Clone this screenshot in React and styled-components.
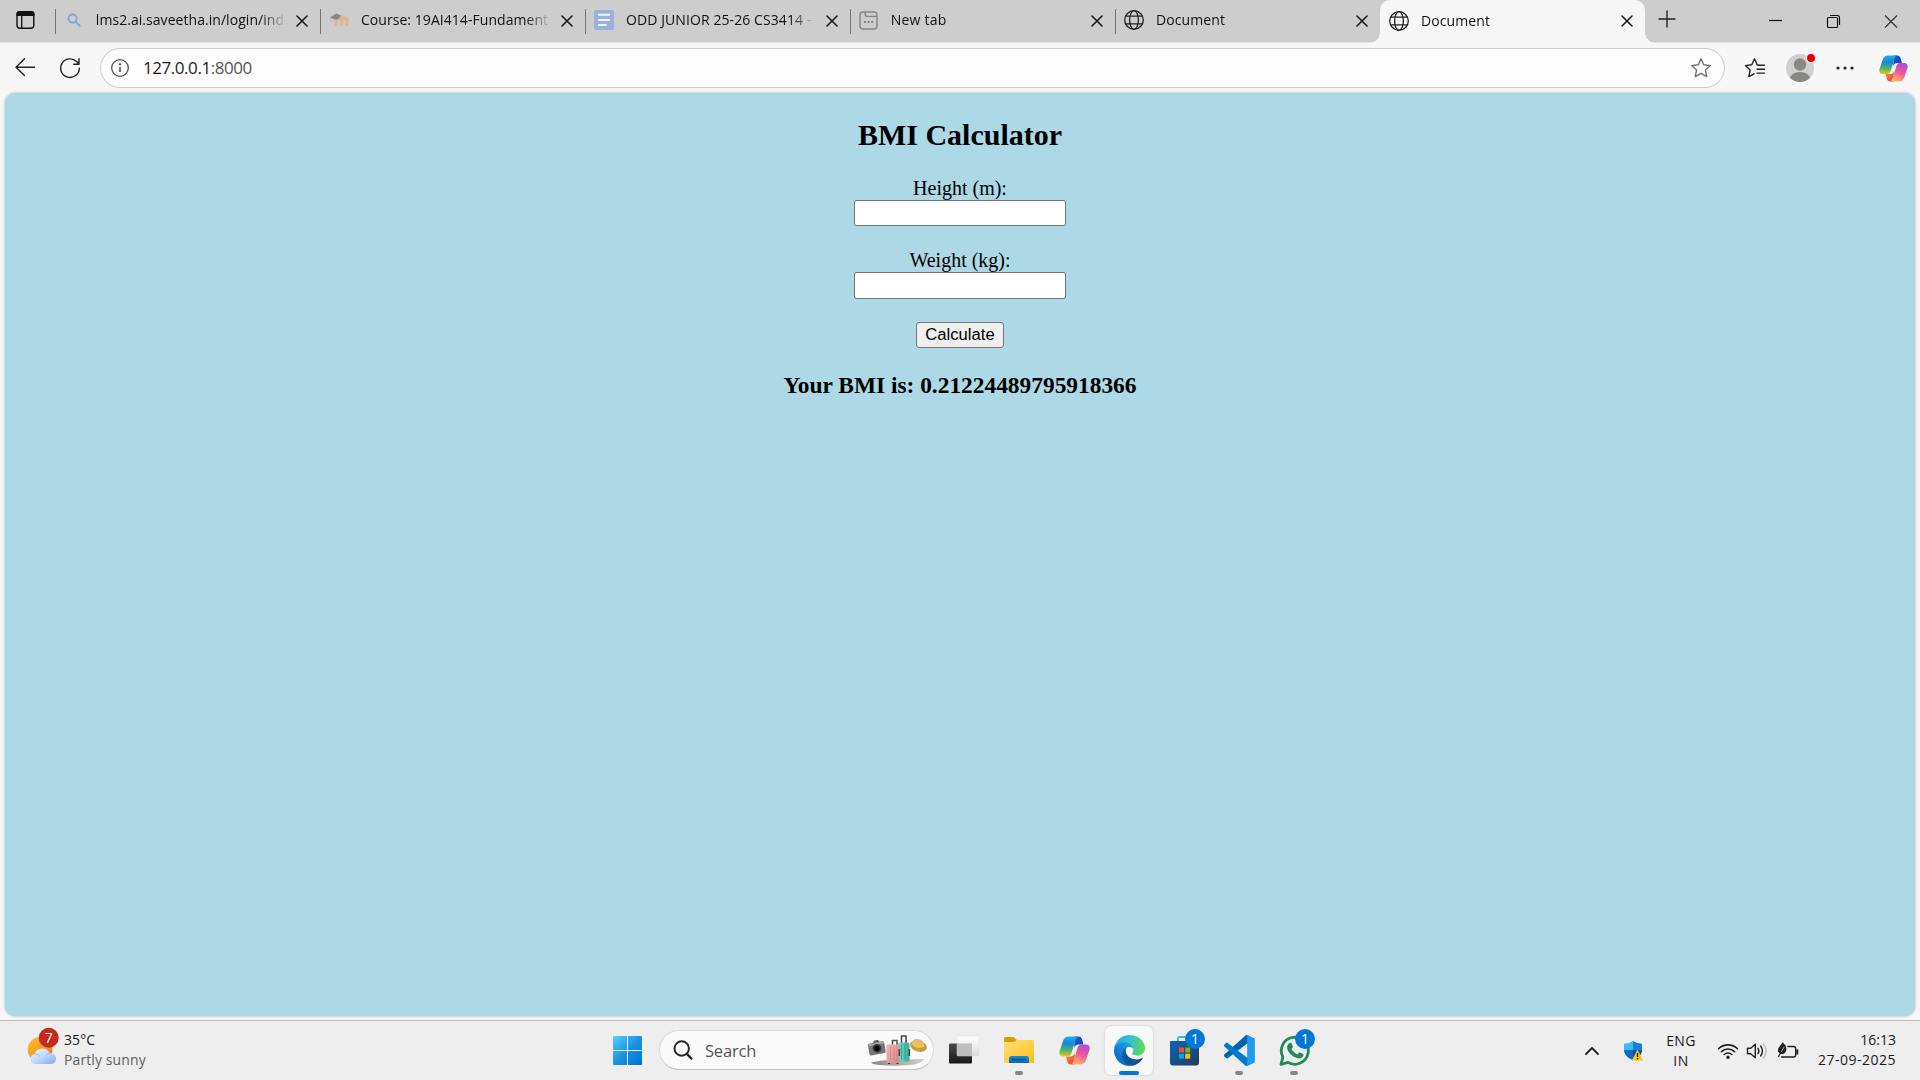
import React from "react";
import styled, { createGlobalStyle } from "styled-components";

const GlobalStyle = createGlobalStyle`
  * { box-sizing: border-box; }
  html, body { margin: 0; padding: 0; overflow: hidden; }
  body { background: #f7f7f7; font-family: "Open Sans", "Noto Sans", sans-serif; color: #1b1b1b; }
  svg { display: block; flex: none; }
  button { font: inherit; }
`;

const Screen = styled.div`
  width: 1920px;
  height: 1080px;
  display: flex;
  flex-direction: column;
  background: #f7f7f7;
  overflow: hidden;
`;

/* ---------- tab strip ---------- */
const TabStrip = styled.header`
  display: flex;
  height: 43px;
  flex: none;
  background: #cdcdcd;
  border-bottom: 1px solid #e4e4e4;
`;
const TabActions = styled.div`
  width: 55px;
  padding: 10px 0 0 16px;
`;
const TabBox = styled.div`
  position: relative;
  display: flex;
  align-items: center;
  width: 265px;
  height: ${(p) => (p.$active ? 43 : 42)}px;
  padding: 0 6px 2px 9px;
  background: ${(p) => (p.$active ? "#f7f7f7" : "transparent")};
  border-radius: ${(p) => (p.$active ? "10px 10px 0 0" : 0)};
  z-index: ${(p) => (p.$active ? 1 : 0)};
  &::before, &::after {
    content: "";
    display: ${(p) => (p.$active ? "block" : "none")};
    position: absolute;
    bottom: 0;
    width: 10px;
    height: 10px;
  }
  &::before { left: -10px; background: radial-gradient(circle at 0 0, transparent 9.5px, #f7f7f7 10px); }
  &::after { right: -10px; background: radial-gradient(circle at 100% 0, transparent 9.5px, #f7f7f7 10px); }
`;
const TabRule = styled.i`
  width: 1px;
  height: 25px;
  margin: 2px 0 0 -9px;
  background: ${(p) => (p.$hidden ? "transparent" : "#767676")};
`;
const Favicon = styled.span`
  display: flex;
  justify-content: center;
  width: 20px;
  margin-left: 8px;
`;
const TabTitle = styled.span`
  width: 191px;
  margin-left: 12px;
  white-space: nowrap;
  font-size: 14px;
  line-height: 22px;
  letter-spacing: ${(p) => p.$track || 0}px;
  color: #111;
  mask-image: linear-gradient(to right, #000 164px, transparent 191px);
`;
const TabClose = styled.button`
  display: flex;
  align-items: center;
  justify-content: center;
  width: 24px;
  height: 24px;
  margin: 1px 0 0 5px;
  padding: 0;
  border: 0;
  background: none;
`;
const NewTab = styled.div`
  width: 44px;
  padding: 10px 0 0 13px;
`;
const WindowButtons = styled.div`
  display: flex;
  margin-left: auto;
  svg { width: 58px; height: 42px; }
`;

/* ---------- toolbar ---------- */
const Toolbar = styled.nav`
  display: flex;
  align-items: center;
  flex: none;
  height: 50px;
  padding-left: 14px;
`;
const NavButtons = styled.div`
  display: flex;
  gap: 23px;
  width: 86px;
`;
const AddressBar = styled.div`
  display: flex;
  align-items: center;
  flex: none;
  width: 1625px;
  height: 40px;
  padding: 0 12px 0 9px;
  background: #fdfdfd;
  border: 1px solid #cbcbcb;
  border-radius: 20px;
`;
const Url = styled.span`
  flex: 1;
  margin-left: 13px;
  padding-bottom: 1px;
  font-size: 17px;
  line-height: 26px;
  letter-spacing: ${(p) => p.$track}px;
  span { color: #555; }
`;
const ToolbarEnd = styled.div`
  display: flex;
  align-items: center;
  padding-left: 19px;
`;
const Slot = styled.span`
  display: flex;
  flex: none;
  justify-content: center;
  width: ${(p) => p.$w}px;
  margin-left: ${(p) => p.$before || 0}px;
  margin-right: ${(p) => p.$after || 0}px;
`;

/* ---------- page ---------- */
const Page = styled.main`
  display: flex;
  flex-direction: column;
  align-items: center;
  flex: none;
  width: 1910px;
  height: 923px;
  margin: 0 0 4px 5px;
  padding-top: 25px;
  background: #add8e6;
  border-radius: 10px;
  box-shadow: 0 0 3px rgba(0, 0, 0, 0.3);
  font-family: "Liberation Serif", "Times New Roman", serif;
  color: #000;
`;
const Title = styled.h2`
  margin: 0 0 25px;
  font-size: 30px;
  line-height: 34px;
`;
const Field = styled.label`
  display: flex;
  flex-direction: column;
  align-items: center;
  margin-bottom: 23px;
  font-size: 20px;
  line-height: 23px;
`;
const Input = styled.input`
  width: 212px;
  height: ${(p) => p.$h}px;
  padding: 1px 2px;
  background: #fff;
  border: 1px solid #767676;
  border-radius: 2px;
  outline: none;
`;
const Calculate = styled.button`
  width: 88px;
  height: 26px;
  padding: 0;
  background: #efefef;
  border: 1px solid #767676;
  border-radius: 3px;
  font: 16.67px/22px "Liberation Sans", Arial, sans-serif;
  color: #000;
`;
const Result = styled.h3`
  margin: 24px 0 0;
  font-size: 23.4px;
  line-height: 27px;
`;

/* ---------- taskbar ---------- */
const Taskbar = styled.footer`
  display: grid;
  grid-template-columns: 600px 722px 1fr;
  flex: none;
  height: 60px;
  background: #eee;
  border-top: 1px solid #bdbdbd;
`;
const Weather = styled.div`
  display: flex;
  padding: 5px 0 0 26px;
`;
const WeatherText = styled.div`
  display: flex;
  flex-direction: column;
  margin: 4px 0 0 4px;
  font-size: 14px;
  line-height: 20px;
`;
const Line = styled.span`
  color: ${(p) => (p.$muted ? "#606060" : "#1b1b1b")};
  letter-spacing: ${(p) => p.$track || 0}px;
  white-space: nowrap;
`;
const Dock = styled.div`
  display: flex;
  align-items: center;
  padding-bottom: 1px;
`;
const StartSlot = styled.div`
  width: 59px;
  padding-left: 13px;
`;
const SearchBox = styled.div`
  display: flex;
  align-items: center;
  width: 275px;
  height: 40px;
  margin-right: 2px;
  padding: 0 6px 0 13px;
  background: #fafafa;
  border: 1px solid #dadada;
  border-bottom-color: #c2c2c2;
  border-radius: 20px;
`;
const SearchLabel = styled.span`
  flex: 1;
  margin-left: 12px;
  padding-top: 1px;
  font-size: 16.5px;
  letter-spacing: ${(p) => p.$track}px;
  color: #555;
`;
const AppCell = styled.div`
  position: relative;
  display: flex;
  align-items: center;
  justify-content: center;
  width: 48px;
  height: 49px;
  margin: 0 3px 0 4px;
  background: ${(p) => (p.$active ? "#f8f8f8" : "transparent")};
  border-radius: 6px;
  box-shadow: ${(p) => (p.$active ? "0 0 2px rgba(0,0,0,.22)" : "none")};
`;
const RunMark = styled.i`
  position: absolute;
  bottom: 0;
  width: ${(p) => (p.$active ? 20 : 8)}px;
  height: 4px;
  border-radius: 2px;
  background: ${(p) => (p.$active ? "#0078d4" : "#868686")};
`;
const Badge = styled.b`
  position: absolute;
  top: 3px;
  right: 3px;
  width: 20px;
  height: 20px;
  border-radius: 50%;
  background: #0078d4;
  color: #fff;
  font-size: 14px;
  font-weight: 400;
  line-height: 20px;
  text-align: center;
`;
const Tray = styled.div`
  display: flex;
  align-items: center;
  justify-content: flex-end;
  padding-right: 24px;
`;
const TextStack = styled.div`
  display: flex;
  flex-direction: column;
  align-items: ${(p) => p.$align};
  width: ${(p) => p.$w}px;
  padding-bottom: ${(p) => p.$lift || 0}px;
  font-size: 14px;
  line-height: 20px;
`;

/* ---------- icons ---------- */
const stroke = { fill: "none", stroke: "#222", strokeWidth: 1.4, strokeLinecap: "round", strokeLinejoin: "round" };

const Cross = ({ size = 12, color = "#111", w = 1.5 }) => (
  <svg width={size} height={size} viewBox="0 0 12 12"><path d="M1 1l10 10M11 1L1 11" stroke={color} strokeWidth={w} strokeLinecap="round" /></svg>
);
const Globe = () => (
  <svg width="20" height="20" viewBox="0 0 20 20" {...stroke} strokeWidth="1.3">
    <circle cx="10" cy="10" r="9.3" />
    <ellipse cx="10" cy="10" rx="4.4" ry="9.3" />
    <path d="M1.6 6.2h16.8M1.6 13.8h16.8" />
  </svg>
);
const SearchFav = () => (
  <svg width="14" height="14" viewBox="0 0 14 14" fill="none" stroke="#7fa9d6" strokeWidth="1.9" strokeLinecap="round">
    <circle cx="5.6" cy="5.6" r="4.1" /><path d="M8.8 8.8l4 4" />
  </svg>
);
const MoodleFav = () => (
  <svg width="20" height="14" viewBox="0 0 20 14" fill="none">
    <path d="M7 13V7.8Q7 5 9.7 5t2.8 2.8V13M12.5 13V7.8Q12.5 5 15.2 5T18 7.8V13" stroke="#e3b38c" strokeWidth="2.8" />
    <path d="M1 4.2L7.5.5l5 2.3-4 3.8-4-.4z" fill="#858585" />
    <path d="M1.8 4.2v5" stroke="#aaa" strokeWidth=".8" />
  </svg>
);
const DocsFav = () => (
  <svg width="20" height="20" viewBox="0 0 20 20"><rect width="20" height="20" rx="2" fill="#99b1e2" />
    <path d="M4 4.8h12M4 10h12M4 15h8.5" stroke="#f1f3f8" strokeWidth="2" /></svg>
);
const NewTabFav = () => (
  <svg width="19" height="19" viewBox="0 0 19 19" fill="none" stroke="#858585" strokeWidth="1.4">
    <rect x="1" y="1" width="17" height="17" rx="3" />
    <path d="M6.3 1v2.4a2 2 0 0 0 2 2H18" />
    <path d="M5 11h2M8.6 11h2M12.2 11h2" strokeWidth="2" />
  </svg>
);
const WorkspaceIcon = () => (
  <svg width="19" height="20" viewBox="0 0 19 20"><rect x="1" y="1.7" width="16.8" height="16.6" rx="3" fill="none" stroke="#111" strokeWidth="1.4" />
    <path d="M.5 6V4a3 3 0 0 1 3-3h12a3 3 0 0 1 3 3v2z" fill="#111" /><path d="M5.7 6v12" stroke="#111" strokeWidth="1.3" /></svg>
);
const BackIcon = () => (
  <svg width="22" height="20" viewBox="0 0 22 20" {...stroke}><path d="M20.5 10.2H2M10.5 1.7L2 10.2l8.5 8.3" /></svg>
);
const ReloadIcon = () => (
  <svg width="22" height="22" viewBox="0 0 22 22" {...stroke}><path d="M20.3 11.2A9.3 9.3 0 1 1 17.6 4.6l2.1 2.2M20 1.8v5.4h-5.3" /></svg>
);
const InfoIcon = () => (
  <svg width="20" height="20" viewBox="0 0 20 20" fill="none" stroke="#4c4c4c" strokeWidth="1.3"><circle cx="10" cy="10" r="8.3" /><path d="M10 9v5" strokeWidth="1.6" /><circle cx="10" cy="6.4" r=".5" /></svg>
);
const StarIcon = () => (
  <svg width="22" height="22" viewBox="0 0 22 22" {...stroke} stroke="#707070"><path d="M11 1.8l2.75 6 6.6.8-4.85 4.5 1.25 6.5L11 16.4l-5.75 3.2 1.25-6.5L1.65 8.6l6.6-.8z" /></svg>
);
const FavoritesIcon = () => (
  <svg width="22" height="22" viewBox="0 0 22 22" {...stroke}><path d="M14.3 8L13.1 7.8 10.5 1.8 7.8 7.8l-6.4.8 4.7 4.5-1.2 6.5 5.2-2.8M14 8.3h6.5M13 12.2h7.5M13 16.1h7.5" /></svg>
);
const AvatarIcon = () => (
  <svg width="30" height="30" viewBox="0 0 30 30">
    <defs><clipPath id="face"><circle cx="15" cy="15" r="14" /></clipPath></defs>
    <circle cx="15" cy="15" r="14" fill="#d2d0ce" />
    <circle cx="15" cy="11.5" r="6.2" fill="#8a8886" />
    <ellipse cx="15" cy="26" rx="10.4" ry="7" fill="#8a8886" clipPath="url(#face)" />
    <circle cx="26" cy="5" r="5" fill="#f7f7f7" /><circle cx="26" cy="5" r="4" fill="#e60000" />
  </svg>
);
const DotsIcon = () => (
  <svg width="18" height="4" viewBox="0 0 18 4" fill="#222"><circle cx="2" cy="2" r="1.6" /><circle cx="9" cy="2" r="1.6" /><circle cx="16" cy="2" r="1.6" /></svg>
);
const CopilotIcon = ({ size, id }) => (
  <svg width={size} height={size} viewBox="0 0 30 30">
    <defs>
      <linearGradient id={`${id}a`} x1=".3" y1="0" x2=".25" y2="1"><stop offset="0" stopColor="#18aef0" /><stop offset=".35" stopColor="#1687dc" /><stop offset=".7" stopColor="#55b463" /><stop offset="1" stopColor="#eccb12" /></linearGradient>
      <linearGradient id={`${id}b`} x1=".8" y1="0" x2=".4" y2="1"><stop offset="0" stopColor="#a34be5" /><stop offset=".5" stopColor="#ee5797" /><stop offset="1" stopColor="#ffb36b" /></linearGradient>
      <linearGradient id={`${id}c`} x1="0" y1="0" x2="1" y2="1"><stop offset="0" stopColor="#1565d0" /><stop offset="1" stopColor="#1d35a9" /></linearGradient>
      <linearGradient id={`${id}d`} x1="0" y1="0" x2="1" y2="1"><stop offset="0" stopColor="#ff9b3d" /><stop offset="1" stopColor="#e23b35" /></linearGradient>
    </defs>
    <path d="M15 1.5h3.8c2.2 0 3.2 1.5 3.8 3.6l1 4.2h-4.5c-2.5 0-3.7 1.3-4.3 3.4z" fill={`url(#${id}c)`} />
    <path d="M15 28.5h-3.4c-2.3 0-3.2-1.6-3.8-3.7l-1.2-4.1h4.5c2.6 0 3.6-1.4 4.3-3.5z" fill={`url(#${id}d)`} />
    <path d="M9.5 1.5h10c-2.1 0-3 1.8-3.6 3.7l-4 12.6c-.7 2-1.8 3-4 3H4C.8 20.8-.2 18.2.6 15.5L4 5.5C4.9 3 6.6 1.5 9.5 1.5z" fill={`url(#${id}a)`} />
    <path d="M20.5 28.5h-10c2.1 0 3-1.8 3.6-3.7l4-12.6c.7-2 1.8-3 4-3H26c3.2 0 4.2 2.6 3.4 5.3L26 24.5c-.9 2.5-2.6 4-5.5 4z" fill={`url(#${id}b)`} />
  </svg>
);
const WeatherIcon = () => (
  <svg width="34" height="42" viewBox="0 0 34 42">
    <defs>
      <linearGradient id="sun" x1="0" y1="0" x2="1" y2="1"><stop offset="0" stopColor="#f8c531" /><stop offset="1" stopColor="#ed7416" /></linearGradient>
      <linearGradient id="cloud" x1="0" y1="0" x2="1" y2="1"><stop offset="0" stopColor="#eaf5ff" /><stop offset=".5" stopColor="#c1dbfa" /><stop offset="1" stopColor="#7ea5e7" /></linearGradient>
    </defs>
    <circle cx="14" cy="23.5" r="12.4" fill="url(#sun)" />
    <path d="M9 38a5 5 0 0 1-.3-9.9A8 8 0 0 1 23.500 27 5.600 5.600 0 1 1 23.500 38z" fill="url(#cloud)" />
    <path d="M9 28.200q3.200-.2 5 2.200M19.500 30q2-3.200 5.500-2.800" fill="none" stroke="#88ace8" strokeWidth=".7" />
    <circle cx="22.700" cy="11.700" r="10" fill="#c42b1c" />
    <text x="22.700" y="16.700" textAnchor="middle" fontFamily="Open Sans, sans-serif" fontSize="14" fill="#fff">7</text>
  </svg>
);
const WindowsLogo = () => (
  <svg width="29" height="29" viewBox="0 0 29 29"><defs><linearGradient id="win" x1="0" y1="0" x2="1" y2="1" ><stop offset="0" stopColor="#52d1ff" /><stop offset=".5" stopColor="#1a94e2" /><stop offset="1" stopColor="#0070d2" /></linearGradient></defs>
    <path d="M1 0h13v14H0V1a1 1 0 0 1 1-1zM15 0h13a1 1 0 0 1 1 1v13H15zM0 15h14v14H1a1 1 0 0 1-1-1zM15 15h14v13a1 1 0 0 1-1 1H15z" fill="url(#win)" /></svg>
);
const LensIcon = () => (
  <svg width="20" height="20" viewBox="0 0 20 20" fill="none" stroke="#242424" strokeLinecap="round"><circle cx="8.700" cy="8.500" r="7.200" strokeWidth="1.900" /><path d="M14 14l4.300 4.500" strokeWidth="2.500" /></svg>
);
const TravelIcon = () => (
  <svg width="60" height="32" viewBox="0 0 60 32">
    <defs>
      <linearGradient id="pink" x1="0" y1="0" x2="1" y2="1"><stop offset="0" stopColor="#f2b5b2" /><stop offset="1" stopColor="#d98888" /></linearGradient>
      <linearGradient id="teal" x1="0" y1="0" x2="1" y2="0"><stop offset="0" stopColor="#73dfc7" /><stop offset="1" stopColor="#38ad98" /></linearGradient>
      <linearGradient id="shade" x1="0" y1="0" x2="1" y2="0"><stop offset="0" stopColor="#8b8583" /><stop offset="1" stopColor="#d4d0ce" /></linearGradient>
    </defs>
    <path d="M4 28.500Q20 25 32 26.500 46 24.500 58 25q-4 4-10 5.500-18 2-36 .5-7-1-8-2.500z" fill="url(#shade)" />
    <g transform="rotate(-10 9 14)"><rect x="1.500" y="8.500" width="16.500" height="12" rx="1.500" fill="#777" /><path d="M7 8.500l1.300-2h4l1.500 2z" fill="#555" /><rect x="2.500" y="9" width="15" height="2" fill="#a9a9a9" /><circle cx="10" cy="14.500" r="4.300" fill="#333" /><circle cx="10" cy="14.500" r="2.600" fill="#060606" /></g>
    <path d="M34.500 9V2h4.500V9" fill="none" stroke="#444356" strokeWidth="1.500" />
    <rect x="31" y="8.500" width="11.500" height="19" rx="2" fill="url(#teal)" /><path d="M34.500 10v16M38 10v16" stroke="#299b89" strokeWidth=".8" /><path d="M42.300 15v7" stroke="#324454" strokeWidth="1.500" />
    <path d="M25.500 11V6.500h4.500V11" fill="none" stroke="#504a5d" strokeWidth="1.500" />
    <rect x="19.500" y="10.500" width="13" height="18.500" rx="2" fill="url(#pink)" /><path d="M23.500 12v15M27 12v15M30 12v15" stroke="#cf8585" strokeWidth=".7" /><path d="M32.300 15v7" stroke="#49404e" strokeWidth="1.500" />
    <path d="M22 29v1M30.500 29v1" stroke="#333" strokeWidth="2" />
    <ellipse cx="51.500" cy="12" rx="8.500" ry="5.600" transform="rotate(18 51.500 12)" fill="#c8964c" />
    <path d="M45 9.500q1-5.500 6-4.500 6 1 6.300 6.300Q50 14.500 45 9.500z" fill="#e6bb73" /><path d="M45 9.500q5 5 12.200 2.500" fill="none" stroke="#efd134" strokeWidth="1.800" />
  </svg>
);
const TaskViewIcon = () => (
  <svg width="31" height="30" viewBox="0 0 31 30">
    <defs><linearGradient id="tvd" x1="0" y1="0" x2="0" y2="1"><stop offset="0" stopColor="#4a4a4a" /><stop offset="1" stopColor="#191919" /></linearGradient><linearGradient id="tvl" x1="0" y1="0" x2="0" y2="1"><stop offset="0" stopColor="#fff" /><stop offset="1" stopColor="#dcdcdc" /></linearGradient></defs>
    <rect x="0" y="8.500" width="23" height="20" rx="1" fill="url(#tvd)" />
    <rect x="8" y="1" width="22" height="20" rx="1.500" fill="url(#tvl)" stroke="#ddd" strokeWidth=".5" />
    <path d="M8 8.500h15V21H9a1 1 0 0 1-1-1z" fill="#bebebe" />
  </svg>
);
const FolderIcon = () => (
  <svg width="32" height="30" viewBox="0 0 32 30">
    <defs><linearGradient id="fold" x1="0" y1="0" x2="1" y2="1"><stop offset="0" stopColor="#ffe078" /><stop offset="1" stopColor="#ffbe18" /></linearGradient><linearGradient id="fblue" x1="0" y1="0" x2="0" y2="1"><stop offset="0" stopColor="#148cdc" /><stop offset="1" stopColor="#0768b9" /></linearGradient></defs>
    <path d="M1 14V3.500A1.500 1.500 0 0 1 2.500 2h8l3.500 3h8v9z" fill="#dc9c08" />
    <path d="M1 7h10l3-2h15.500A1.500 1.500 0 0 1 31 6.500V28H1z" fill="url(#fold)" />
    <path d="M6 28v-4.500A2.500 2.500 0 0 1 8.500 21h15a2.500 2.500 0 0 1 2.500 2.500V28z" fill="url(#fblue)" /><path d="M9.500 24.500h13" stroke="#05498a" strokeWidth="1.400" strokeLinecap="round" />
  </svg>
);
const EdgeIcon = () => (
  <svg width="31" height="31" viewBox="0 0 256 256">
    <defs>
      <linearGradient id="e1" x1="60" y1="177" x2="240" y2="177" gradientUnits="userSpaceOnUse"><stop offset="0" stopColor="#0c59a4" /><stop offset="1" stopColor="#114a8b" /></linearGradient>
      <linearGradient id="e2" x1="150" y1="95" x2="50" y2="215" gradientUnits="userSpaceOnUse"><stop offset="0" stopColor="#1b9de2" /><stop offset=".5" stopColor="#1483d8" /><stop offset="1" stopColor="#0d6fc7" /></linearGradient>
      <linearGradient id="e3" x1="25" y1="70" x2="250" y2="110" gradientUnits="userSpaceOnUse"><stop offset="0" stopColor="#2baee8" /><stop offset=".45" stopColor="#2fc2d2" /><stop offset="1" stopColor="#65d950" /></linearGradient>
    </defs>
    <path d="M231 190.500c-3.400 1.800-6.900 3.300-10.500 4.700-11.500 4.300-23.600 6.500-35.900 6.500-47.300 0-88.500-32.500-88.500-74.300.1-11.400 6.400-21.900 16.400-27.300-42.800 1.800-53.800 46.400-53.800 72.500 0 73.900 68.100 81.400 82.800 81.400 7.900 0 19.800-2.300 27-4.600l1.300-.4c27.600-9.500 51-28.100 66.600-52.800 1.200-1.900.6-4.300-1.200-5.500-1.300-.8-2.900-.9-4.200-.2z" fill="url(#e1)" />
    <path d="M105.700 241.400c-8.900-5.500-16.600-12.800-22.700-21.300-26.300-36-18.400-86.500 17.600-112.800 3.800-2.700 7.700-5.200 11.900-7.200 3.100-1.500 8.400-4.100 15.500-4 10.100.1 19.600 4.900 25.700 13 4 5.400 6.300 11.900 6.400 18.700 0-.2 24.500-79.600-80-79.600-43.900 0-80 41.700-80 78.200-.2 19.300 4 38.500 12.100 56 27.600 58.800 94.800 87.600 156.400 67.100-21.100 6.600-44.100 3.700-62.900-8.100z" fill="url(#e2)" />
    <path d="M152.300 148.900c-.8 1-3.300 2.500-3.300 5.700 0 2.600 1.700 5.100 4.700 7.200 14.400 10 41.500 8.700 41.600 8.700 10.700 0 21.100-2.900 30.300-8.300 18.800-11 30.400-31.100 30.400-52.900.3-22.400-8-37.300-11.300-43.900C223.500 23.900 177.700 0 128 0 58 0 1 56.200 0 126.200.5 89.700 36.800 60.200 80 60.200c3.500 0 23.500.3 42 10.100 16.300 8.600 24.900 18.900 30.800 29.200 6.200 10.700 7.300 24.100 7.300 29.500 0 5.300-2.700 13.300-7.800 19.900z" fill="url(#e3)" />
  </svg>
);
const StoreIcon = () => (
  <svg width="31" height="31" viewBox="0 0 31 31">
    <defs><linearGradient id="st" x1="0" y1="0" x2="1" y2="1"><stop offset="0" stopColor="#0d66b8" /><stop offset="1" stopColor="#26395c" /></linearGradient></defs>
    <path d="M9 7V3.500A1.500 1.500 0 0 1 10.500 2h10A1.500 1.500 0 0 1 22 3.500V7" fill="none" stroke="#37bde8" strokeWidth="2" />
    <path d="M1 6h29v21.500a3 3 0 0 1-3 3H4a3 3 0 0 1-3-3z" fill="url(#st)" />
    <path d="M10 12.500h5v5h-5z" fill="#f25022" /><path d="M16.200 12.500h5v5h-5z" fill="#7fba00" /><path d="M10 18.700h5v5h-5z" fill="#00a4ef" /><path d="M16.200 18.700h5v5h-5z" fill="#ffb900" />
  </svg>
);
const CodeIcon = () => (
  <svg width="31" height="31" viewBox="0 0 100 100">
    <path d="M96 10.600L75.500.900a6.200 6.200 0 0 0-7.100 1.200L1.300 63.200a4.200 4.200 0 0 0 0 6.200l5.500 5a4.200 4.200 0 0 0 5.300.2L93 13.400c2.700-2.100 6.600-.1 6.600 3.300v-.3c0-2.400-1.400-4.700-3.600-5.800z" fill="#0065a9" />
    <path d="M96 89.300l-20.500 9.900a6.200 6.200 0 0 1-7.100-1.200L1.300 36.900a4.200 4.200 0 0 1 0-6.200l5.500-5a4.200 4.200 0 0 1 5.300-.2L93 86.700c2.700 2 6.600.1 6.600-3.300v.2c0 2.400-1.400 4.600-3.600 5.700z" fill="#007acc" />
    <path d="M75.500 99.100a6.200 6.200 0 0 1-7.100-1.200c2.300 2.300 6.300.700 6.300-2.600V4.700c0-3.300-4-4.900-6.300-2.600A6.200 6.200 0 0 1 75.500.900L96 10.800a6.300 6.300 0 0 1 3.500 5.600v67.200c0 2.400-1.400 4.600-3.500 5.600z" fill="#1f9cf0" />
  </svg>
);
const WhatsAppIcon = () => (
  <svg width="31" height="31" viewBox="0 0 31 31">
    <path d="M2 29.300l1.900-7.200A13.500 13.500 0 1 1 9 27.400z" fill="none" stroke="#1f8b57" strokeWidth="2.800" strokeLinejoin="round" />
    <path d="M10.200 8.200c.9-.8 2-.6 2.400.4l1.200 2.700c.3.700-.1 1.400-1.400 2.800 1.600 2.800 3.600 4.400 6 5.300 1.400-1.700 1.900-2.200 2.600-1.900l2.700 1.300c1 .5.900 1 .6 2.100-1 2.400-4 3-6.600 2-4.700-1.600-8-5-9.300-8.400-.7-2.400-.1-5 1.800-6.300z" fill="#1f8b57" />
  </svg>
);
const ShieldIcon = () => (
  <svg width="21" height="22" viewBox="0 0 21 22">
    <path d="M10 1Q6 3.800 1 3.800V10c0 5 4 7.800 9 10z" fill="#35bdf0" /><path d="M10 1q4 2.800 9 2.800V10c0 5-4 7.800-9 10z" fill="#1080dc" />
    <path d="M1 10h9v10C5 17.800 1.300 15 1 10z" fill="#0a6cc8" /><path d="M10 10h9c-.3 5-4 7.800-9 10z" fill="#0755a4" />
    <path d="M14.500 9.500l5.700 11H8.800z" fill="#ffc21a" /><path d="M14.500 13v4" stroke="#222" strokeWidth="1.300" /><circle cx="14.500" cy="18.700" r=".8" fill="#222" />
  </svg>
);
const WifiIcon = () => (
  <svg width="22" height="18" viewBox="0 0 22 18" {...stroke} strokeWidth="1.600"><path d="M1.500 6.800a13.500 13.500 0 0 1 19 0M4.300 9.700a9.500 9.500 0 0 1 13.400 0M7.200 12.500a5.400 5.400 0 0 1 7.600 0" /><circle cx="11" cy="15.300" r="1.700" fill="#222" stroke="none" /></svg>
);
const SpeakerIcon = () => (
  <svg width="22" height="18" viewBox="0 0 22 18" {...stroke}><path d="M1.500 6.200h3.200L9.300 2.200v13.600L4.700 11.800H1.500z" /><path d="M12 6.300q1.800 2.700 0 5.400M14.700 4q3.500 5 0 10" /><path d="M17.500 1.800q5.300 7.200 0 14.400" stroke="#bcbcbc" /></svg>
);
const BatteryIcon = () => (
  <svg width="22" height="18" viewBox="0 0 22 18" {...stroke}>
    <path d="M11 4.500h5.500a2.200 2.200 0 0 1 2.200 2.200v6.100a2.200 2.200 0 0 1-2.200 2.200H4.500" />
    <path d="M20.300 8.200v3.600" strokeWidth="2" />
    <path d="M1 9.500C.6 5.500 3.200 4 6 0c.3 1.400.8 2 2 2.600 1.600 2.400 2 5.400.4 7.600C7 12.300 3.800 12.500 2.400 11.300z" fill="#222" stroke="none" />
    <path d="M1.500 14.500L6.200 6.500" strokeWidth="1.200" /><path d="M4.300 9.600L7 5.200" stroke="#eee" strokeWidth=".7" />
  </svg>
);

const tabs = [
  { title: "lms2.ai.saveetha.in/login/ind", icon: <SearchFav />, track: 0.05 },
  { title: "Course: 19AI414-Fundament", icon: <MoodleFav />, track: 0.05 },
  { title: "ODD JUNIOR 25-26 CS3414 -", icon: <DocsFav />, track: 0.09 },
  { title: "New tab", icon: <NewTabFav />, track: 0.2 },
  { title: "Document", icon: <Globe />, track: 0.1 },
  { title: "Document", icon: <Globe />, track: 0.1, active: true },
];

const apps = [
  { name: "tasks", icon: <TaskViewIcon /> },
  { name: "files", icon: <FolderIcon />, running: true },
  { name: "copilot", icon: <CopilotIcon size={31} id="dock" /> },
  { name: "edge", icon: <EdgeIcon />, running: true, active: true },
  { name: "store", icon: <StoreIcon />, badge: 1 },
  { name: "code", icon: <CodeIcon />, running: true },
  { name: "chat", icon: <WhatsAppIcon />, running: true, badge: 1 },
];

function BrowserTab({ tab }) {
  return (
    <TabBox $active={tab.active}>
      <TabRule $hidden={tab.active} />
      <Favicon>{tab.icon}</Favicon>
      <TabTitle $track={tab.track}>{tab.title}</TabTitle>
      <TabClose><Cross /></TabClose>
    </TabBox>
  );
}

export default function App() {
  return (
    <Screen>
      <GlobalStyle />
      <TabStrip>
        <TabActions><WorkspaceIcon /></TabActions>
        {tabs.map((t, i) => <BrowserTab key={i} tab={t} />)}
        <NewTab><svg width="18" height="18" viewBox="0 0 18 18" {...stroke}><path d="M9 1v16M1 9h16" /></svg></NewTab>
        <WindowButtons>
          <svg viewBox="0 0 58 42"><path d="M23 20.500h13" stroke="#111" strokeWidth="1.200" /></svg>
          <svg viewBox="0 0 58 42" fill="none" stroke="#111" strokeWidth="1.200"><rect x="23.500" y="17.500" width="10" height="10" rx="1" /><path d="M26 15.500h7.500a2 2 0 0 1 2 2V25" /></svg>
          <svg viewBox="0 0 58 42"><path d="M23 15.500l12 12M35 15.500l-12 12" stroke="#333" strokeWidth="1.200" /></svg>
        </WindowButtons>
      </TabStrip>
      <Toolbar>
        <NavButtons><BackIcon /><ReloadIcon /></NavButtons>
        <AddressBar>
          <InfoIcon />
          <Url $track={-0.45}>127.0.0.1<span>:8000</span></Url>
          <StarIcon />
        </AddressBar>
        <ToolbarEnd>
          <Slot $w={22}><FavoritesIcon /></Slot>
          <Slot $w={68}><AvatarIcon /></Slot>
          <Slot $w={22}><DotsIcon /></Slot>
          <Slot $w={38} $before={18}><CopilotIcon size={29} id="bar" /></Slot>
        </ToolbarEnd>
      </Toolbar>
      <Page>
        <Title>BMI Calculator</Title>
        <Field>Height (m):<Input $h={26} /></Field>
        <Field>Weight (kg):<Input $h={27} /></Field>
        <Calculate>Calculate</Calculate>
        <Result>Your BMI is: 0.21224489795918366</Result>
      </Page>
      <Taskbar>
        <Weather>
          <WeatherIcon />
          <WeatherText><Line $track={0.1}>35°C</Line><Line $muted $track={0.1}>Partly sunny</Line></WeatherText>
        </Weather>
        <Dock>
          <StartSlot><WindowsLogo /></StartSlot>
          <SearchBox><LensIcon /><SearchLabel $track={-0.2}>Search</SearchLabel><TravelIcon /></SearchBox>
          {apps.map((a) => (
            <AppCell key={a.name} $active={a.active}>
              {a.icon}
              {a.running && <RunMark $active={a.active} />}
              {a.badge && <Badge>{a.badge}</Badge>}
            </AppCell>
          ))}
        </Dock>
        <Tray>
          <Slot $w={16}><svg width="16" height="10" viewBox="0 0 16 10" {...stroke} strokeWidth="1.800"><path d="M2 8l6-6 6 6" /></svg></Slot>
          <Slot $w={66}><ShieldIcon /></Slot>
          <TextStack $align="center" $w={30}><Line $track={0.4}>ENG</Line><Line $track={0.4}>IN</Line></TextStack>
          <Slot $w={22} $before={21} $after={7}><WifiIcon /></Slot>
          <Slot $w={22}><SpeakerIcon /></Slot>
          <Slot $w={40}><BatteryIcon /></Slot>
          <TextStack $align="flex-end" $w={88} $lift={2}><Line>16:13</Line><Line $track={0.5}>27-09-2025</Line></TextStack>
        </Tray>
      </Taskbar>
    </Screen>
  );
}
